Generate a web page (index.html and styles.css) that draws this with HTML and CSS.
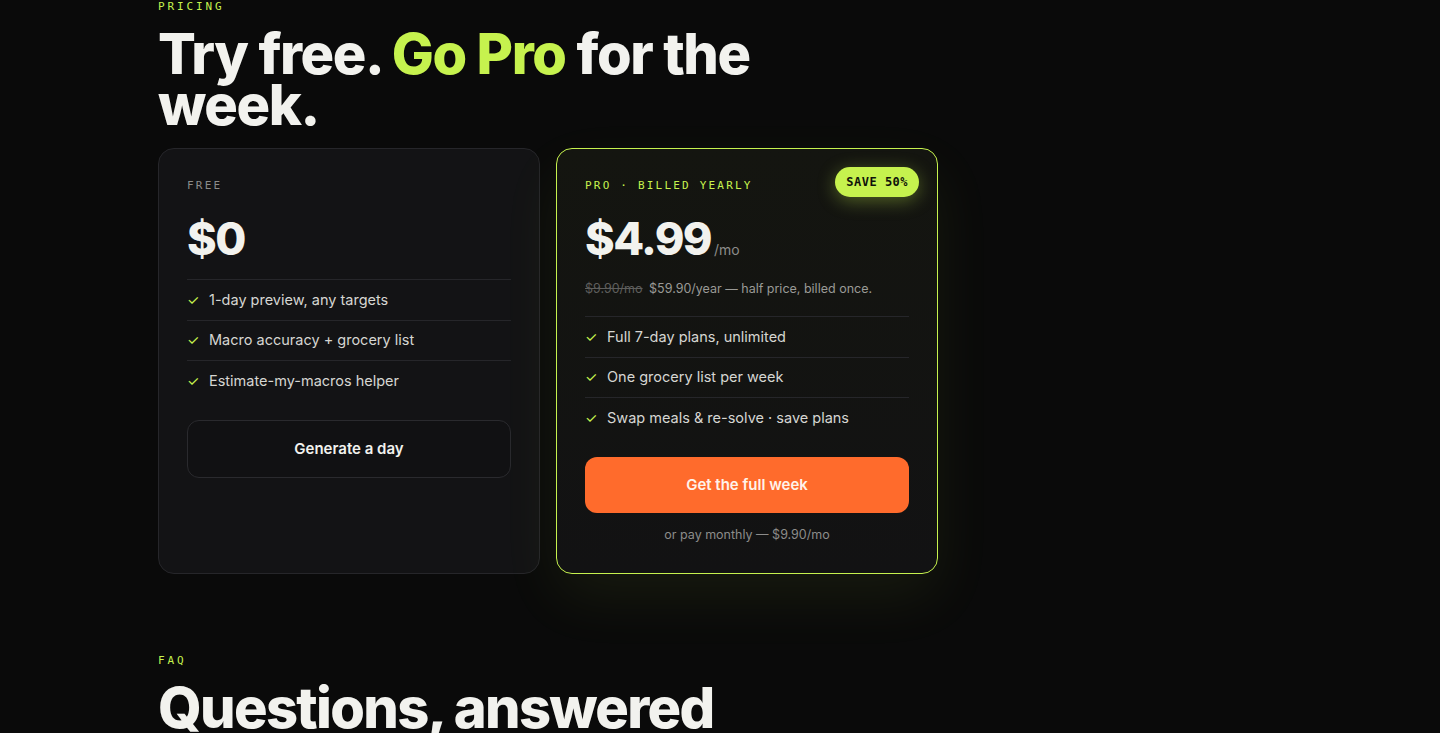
FILE: index.html
```html
<!DOCTYPE html>
<html lang="en">
<head>
<meta charset="utf-8">
<title>Pricing</title>
<link rel="stylesheet" href="styles.css">
</head>
<body>
<main class="page">
  <section class="pricing">
    <div class="eyebrow">PRICING</div>
    <h2 class="title">Try free. <span class="accent">Go Pro</span> for the week.</h2>
    <div class="plans">
      <article class="plan plan-free">
        <div class="plan-label">FREE</div>
        <div class="price-row"><span class="price">$0</span></div>
        <ul class="features">
          <li><span class="check">✓</span>1-day preview, any targets</li>
          <li><span class="check">✓</span>Macro accuracy + grocery list</li>
          <li><span class="check">✓</span>Estimate-my-macros helper</li>
        </ul>
        <button class="btn btn-ghost">Generate a day</button>
      </article>
      <article class="plan plan-pro">
        <span class="badge">SAVE 50%</span>
        <div class="plan-label plan-label-pro">PRO · BILLED YEARLY</div>
        <div class="price-row"><span class="price">$4.99</span><span class="per">/mo</span></div>
        <p class="billing"><s class="old">$9.90/mo</s> $59.90/year — half price, billed once.</p>
        <ul class="features">
          <li><span class="check">✓</span>Full 7-day plans, unlimited</li>
          <li><span class="check">✓</span>One grocery list per week</li>
          <li><span class="check">✓</span>Swap meals &amp; re-solve · save plans</li>
        </ul>
        <button class="btn btn-primary">Get the full week</button>
        <p class="alt">or pay monthly — $9.90/mo</p>
      </article>
    </div>
  </section>
  <section class="faq">
    <div class="eyebrow">FAQ</div>
    <h2 class="title title-faq">Questions, answered</h2>
  </section>
</main>
</body>
</html>
```

FILE: styles.css
```css
* { box-sizing: border-box; }
html, body { margin: 0; padding: 0; }
body {
  background: #0a0a0a;
  color: #f2f2ee;
  font-family: Inter, "Liberation Sans", sans-serif;
  overflow: hidden;
}
.page {
  width: 1124px;
  margin: 0 auto;
}
.eyebrow {
  font-family: "DejaVu Sans Mono", "Liberation Mono", monospace;
  font-size: 11px;
  line-height: 12px;
  padding-top: 1px;
  letter-spacing: 0.26em;
  color: #c6f24e;
}
.title {
  margin: 16px 0 0;
  width: 640px;
  font-family: Inter, "Liberation Sans", sans-serif;
  font-weight: 800;
  font-size: 56px;
  line-height: 51px;
  letter-spacing: -0.025em;
  color: #f2f2ee;
}
.title-faq {
  width: 900px;
  letter-spacing: -0.03em;
}
.accent { color: #c6f24e; }
.plans {
  margin-top: 17px;
  display: grid;
  grid-template-columns: 382px 382px;
  gap: 16px;
}
.plan {
  position: relative;
  border-radius: 16px;
  padding: 30px 28px 30px;
  display: flex;
  flex-direction: column;
}
.plan-free {
  background: #131315;
  border: 1px solid #26262a;
}
.plan-pro {
  background: linear-gradient(180deg, #141510 0%, #121213 100%);
  border: 1px solid #c6f24e;
  box-shadow: 0 24px 60px rgba(198, 242, 78, 0.07);
}
.plan-label {
  font-family: "DejaVu Sans Mono", "Liberation Mono", monospace;
  font-size: 11px;
  line-height: 14px;
  letter-spacing: 0.2em;
  color: #8c8c8a;
}
.plan-label-pro { color: #c6f24e; }
.badge {
  position: absolute;
  top: 18px;
  right: 18px;
  height: 30px;
  padding: 0 11px;
  border-radius: 15px;
  background: #c6f24e;
  color: #10120a;
  font-family: "DejaVu Sans Mono", "Liberation Mono", monospace;
  font-weight: 700;
  font-size: 12px;
  line-height: 30px;
  letter-spacing: 0.04em;
  box-shadow: 0 4px 18px rgba(198, 242, 78, 0.35);
}
.price-row {
  margin-top: 22px;
  display: flex;
  align-items: baseline;
  gap: 3px;
}
.price {
  font-weight: 800;
  font-size: 45px;
  line-height: 47px;
  letter-spacing: -0.035em;
  color: #f2f2ee;
}
.per {
  font-size: 14px;
  color: #8c8c8a;
}
.billing {
  margin: 18px 0 0;
  font-size: 12.5px;
  line-height: 18px;
  color: #9a9a96;
}
.old { color: #5e5e5c; margin-right: 3px; }
.features {
  list-style: none;
  margin: 17px 0 0;
  padding: 0;
}
.plan-pro .features { margin-top: 18px; }
.features li {
  border-top: 1px solid #26262a;
  padding: 9.5px 0 10px;
  font-size: 14.5px;
  line-height: 20px;
  color: #d6d6d2;
  display: flex;
  align-items: center;
}
.check {
  width: 22px;
  color: #c6f24e;
  font-size: 14px;
}
.btn {
  font-family: Inter, "Liberation Sans", sans-serif;
  font-weight: 600;
  font-size: 15px;
  border-radius: 12px;
  width: 100%;
  cursor: pointer;
}
.btn-ghost {
  margin-top: 19px;
  height: 58px;
  background: #111113;
  border: 1px solid #2a2a2e;
  color: #f2f2ee;
}
.btn-primary {
  margin-top: 19px;
  height: 56px;
  border: none;
  background: #ff6b2c;
  color: #fff3ea;
}
.alt {
  margin: 14px 0 0;
  text-align: center;
  font-size: 12.5px;
  line-height: 16px;
  color: #8c8c8a;
}
.faq {
  margin-top: 80px;
}
```
